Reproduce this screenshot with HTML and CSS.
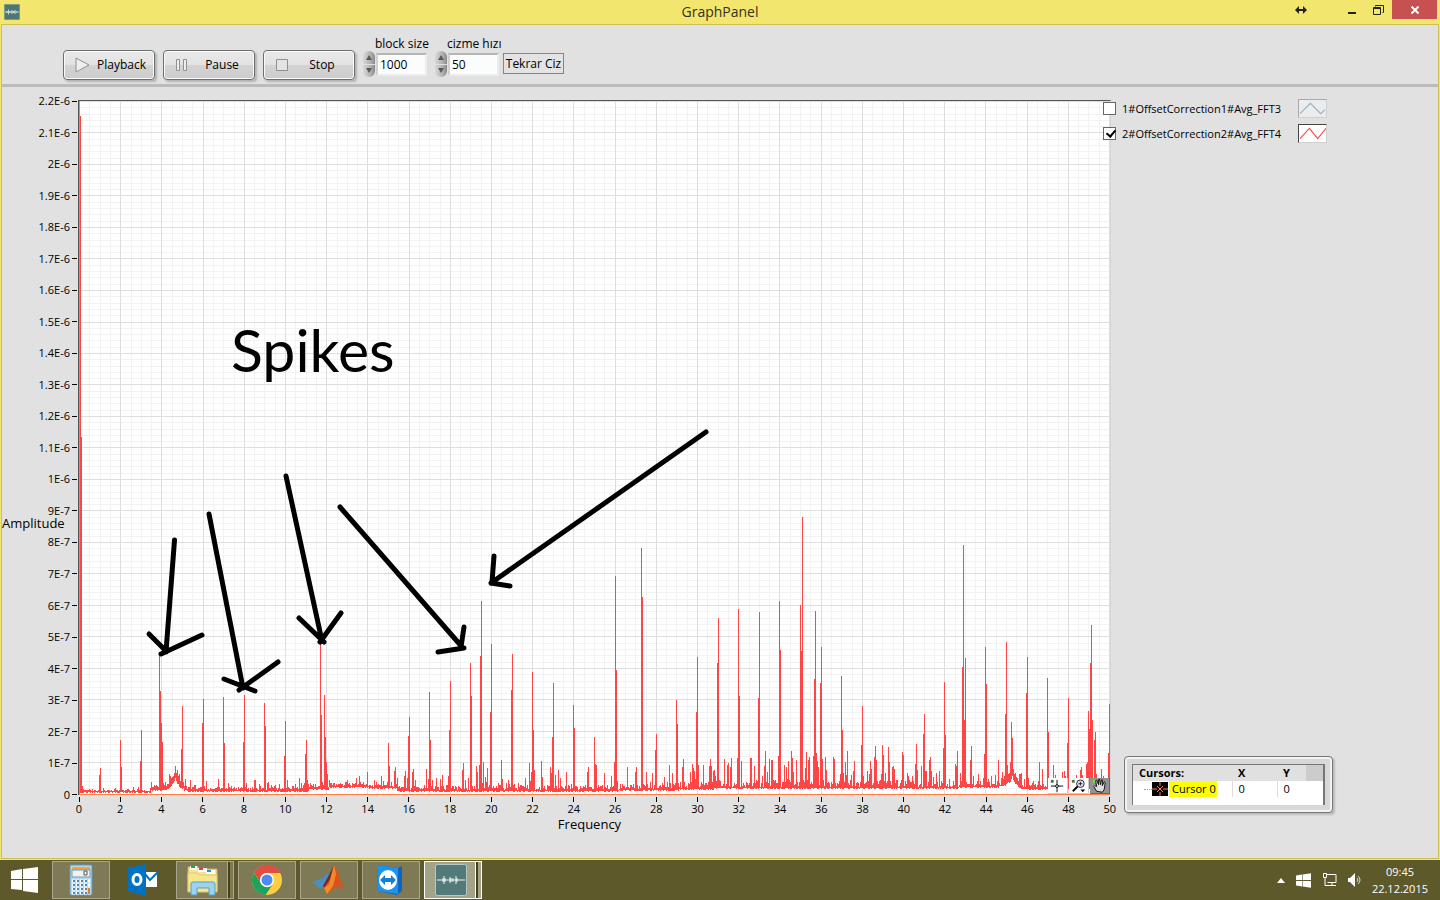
FILE: index.html
```
<!DOCTYPE html>
<html lang="tr">

<head>
  <meta charset="UTF-8" />
  <meta name="viewport" content="width=device-width, initial-scale=1" />
  <title>GraphPanel</title>
  <link rel="stylesheet" href="styles.css">
</head>

<body>

  <div class="window">
    <header class="titlebar">
      <svg class="app-icon" viewBox="0 0 32 32">
        <rect x="0.5" y="0.5" width="31" height="31" rx="2" fill="#4f7776" stroke="#8fa9a5" />
        <path d="M2 16h28M6 14v4M9 11v10M12 14v4M16 12v8M19 14v4M22 12v8M25 15v2" stroke="#e8efee" stroke-width="1.6" />
      </svg>
      <h1>GraphPanel</h1>
      <div class="window-buttons">
        <button class="move-btn" title="Taşı"><svg width="12" height="8" viewBox="0 0 12 8"><path d="M1 4h10" stroke="#222" stroke-width="2" /><path d="M0 4l4-4v8zM12 4l-4-4v8z" fill="#222" /></svg></button>
        <button class="min-btn" title="Küçült"><svg width="8" height="10" viewBox="0 0 8 10"><path d="M0 7h8v2H0z" fill="#222" /></svg></button>
        <button class="restore-btn" title="Geri yükle"><svg width="11" height="10" viewBox="0 0 11 10" fill="none" stroke="#222"><path d="M2.500 1.500v-1h8v7h-1" /><path d="M.5 2.500h7v7h-7zM.5 3.500h7" /></svg></button>
        <button class="close-btn" title="Kapat"><svg width="8" height="8" viewBox="0 0 8 8"><path d="M.5.5l7 7M7.500.5l-7 7" stroke="#fff" stroke-width="2" /></svg></button>
      </div>
    </header>

    <div class="client">
      <div class="toolbar">
        <button class="play-btn"><svg width="15" height="16" viewBox="0 0 15 16"><path d="M1 1l13 7-13 7z" fill="#eee" stroke="#909090" /></svg><span>Playback</span></button>
        <button class="play-btn"><svg width="15" height="14" viewBox="0 0 15 14"><path d="M1.500 1.500h3v11h-3zM8.500 1.500h3v11h-3z" fill="#eee" stroke="#909090" /></svg><span>Pause</span></button>
        <button class="play-btn"><svg width="15" height="14" viewBox="0 0 15 14"><path d="M1.500 1.500h11v11h-11z" fill="#e4e4e4" stroke="#909090" /></svg><span>Stop</span></button>

        <div class="numeric">
          <label for="blockSize">block size</label>
          <div class="numeric-row">
            <span class="spinner"><button title="Artır"></button><button title="Azalt"></button></span>
            <input id="blockSize" type="text" value="1000">
          </div>
        </div>
        <div class="numeric">
          <label for="cizmeHizi">cizme hızı</label>
          <div class="numeric-row">
            <span class="spinner"><button title="Artır"></button><button title="Azalt"></button></span>
            <input id="cizmeHizi" type="text" value="50">
          </div>
        </div>
        <button class="redraw-btn">Tekrar Ciz</button>
      </div>

      <main class="graph">
        <div class="y-axis">
          <div class="y-labels" id="yLabels"></div>
          <span class="y-title">Amplitude</span>
        </div>

        <div class="plot">
          <svg class="plot-canvas" viewBox="0 0 1031 694" preserveAspectRatio="none" shape-rendering="crispEdges">
            <path id="minorGrid" class="minor-grid" />
            <path id="majorGrid" class="major-grid" />
            <path id="trace" class="trace" />
            <path class="cursor-line" d="M0.5 0V693.500H1031" />
          </svg>
          <svg class="notes" viewBox="0 0 1031 694">
            <text x="152" y="271">Spikes</text>
            <path d="M95.500 439L87 551M70 533L87 550M123 534L82 553" />
            <path d="M130 413L164 587M145 578L176 590M199 561L160 589" />
            <path d="M207 375L243 540M220 517L245 541M262 512L241 541" />
            <path d="M261 406L384 547M385 526L382 546M359 551L385 547" />
            <path d="M627 331L412 482M415 455L413 481M431 485L412 482" />
          </svg>
          <div class="palette">
            <button title="Cursor"><svg viewBox="0 0 20 16"><rect x="3" y="2" width="3" height="3" fill="#52704a" /><path d="M9.500 2v5M9.500 10v5M3 8.500h5M11 8.500h5" stroke="#000" /><circle cx="9.500" cy="8.500" r="1.500" fill="none" stroke="#000" /></svg></button>
            <button title="Zoom"><svg viewBox="0 0 20 16"><rect x="3" y="2" width="3" height="3" fill="#52704a" /><circle cx="12" cy="6" r="4" fill="#dcdcff" stroke="#222" /><path d="M10 6h4M12 4v4" stroke="#222" /><path d="M9 9l-5 5" stroke="#000" stroke-width="2" /><path d="M12 12h5l-2.500 3z" /></svg></button>
            <button class="active" title="Pan"><svg viewBox="0 0 20 16"><rect x="3" y="2" width="3" height="3" fill="#6ee51d" /><path d="M7 14L4 9l1-1 2 1-1-6 1-1 2 5V2l1-1 1 6 1-5h1v6l2-4 1 1-1 7-2 3z" fill="#ddd" stroke="#111" /></svg></button>
          </div>
        </div>

        <aside class="side">
          <div class="legend">
            <div class="legend-row">
              <input id="fft3" type="checkbox">
              <label for="fft3">1#OffsetCorrection1#Avg_FFT3</label>
              <svg class="swatch" viewBox="0 0 26 16"><path d="M1 13L11 3l10 10 4-4" stroke="#8fb0c8" fill="none" /></svg>
            </div>
            <div class="legend-row">
              <input id="fft4" type="checkbox" checked>
              <label for="fft4">2#OffsetCorrection2#Avg_FFT4</label>
              <svg class="swatch on" viewBox="0 0 26 16"><path d="M1 13L10 3l8 10 8-10" stroke="#ff4545" fill="none" /></svg>
            </div>
          </div>

          <div class="cursors">
            <div class="cursors-list">
              <table>
                <thead>
                  <tr><th>Cursors:</th><th>X</th><th>Y</th><th></th></tr>
                </thead>
                <tbody>
                  <tr>
                    <td><span class="cursor-cell"><i class="branch"></i><svg width="16" height="14" viewBox="0 0 16 14"><path d="M0 0h16v14H0z" /><path d="M8 0v4M8 10v4M0 7h5M11 7h5M5 4l6 6M11 4l-6 6" stroke="#ff8040" /></svg><mark>Cursor 0</mark></span></td>
                    <td>0</td>
                    <td>0</td>
                    <td></td>
                  </tr>
                </tbody>
              </table>
            </div>
          </div>
        </aside>

        <div class="x-axis">
          <div class="x-labels" id="xLabels"></div>
          <div class="x-title">Frequency</div>
        </div>
      </main>
    </div>
  </div>

  <footer class="taskbar">
    <button class="start-btn" title="Başlat"><svg width="27" height="26" viewBox="0 0 27 26" fill="#fff"><path d="M0 4l11-2v10H0zM12 2l15-2v12H12zM0 13h11v10L0 22zM12 13h15v13l-15-2z" /></svg></button>
    <nav class="tasks">
      <button class="task open" title="Hesap Makinesi">
        <svg width="32" height="32" viewBox="0 0 32 32">
          <rect x="5" y="1" width="22" height="30" rx="1" fill="#b9d8ee" stroke="#5f95bf" />
          <rect x="7" y="3" width="18" height="3" fill="#f0a245" />
          <rect x="7" y="6" width="18" height="7" fill="#eef4f5" stroke="#7998ad" />
          <path d="M19 7h3v4h-3z" fill="none" stroke="#555" />
          <path d="M7 17h18M7 21h18M7 25h18M7 29h18" stroke="#fff" stroke-width="3" stroke-dasharray="3 1" />
          <path d="M8 17h16M8 21h16M8 25h16M8 29h16" stroke="#4f86b3" stroke-width="2" stroke-dasharray="2 2" />
          <path d="M23 24h2v6h-2z" fill="#ef7b16" />
        </svg>
      </button>
      <button class="task" title="Outlook">
        <svg width="32" height="32" viewBox="0 0 32 32">
          <path d="M17 8h13v15H17z" fill="#fff" /><path d="M18 10l5 6 8-8" fill="none" stroke="#0072c6" stroke-width="2" />
          <path d="M1 4l18-4v32L1 27z" fill="#0072c6" />
          <ellipse cx="10" cy="15.500" rx="4" ry="5" fill="none" stroke="#fff" stroke-width="3" />
        </svg>
      </button>
      <button class="task open stacked" title="Dosya Gezgini">
        <svg width="32" height="32" viewBox="0 0 32 32">
          <path d="M1 3h10l2 2h17v22H1z" fill="#f4e49a" stroke="#d0ae4f" />
          <path d="M3 2h7v4H3z" fill="#fff" /><path d="M4 2h4v2H4z" fill="#25a73f" />
          <path d="M11 4h9v4h-9z" fill="#fff" /><path d="M12 4h4v2h-4z" fill="#d94424" />
          <path d="M19 6h9v4h-9z" fill="#fff" /><path d="M20 6h4v2h-4z" fill="#2a91d7" />
          <path d="M1 9h9l2 2h18v17H1z" fill="#f7e68d" stroke="#e2c86d" />
          <path d="M4 31V20q0-2 2-2h20q2 0 2 2v11h-6v-7H10v7z" fill="#9fd2ec" stroke="#5b9dc4" />
        </svg>
      </button>
      <button class="task open" title="Chrome">
        <svg width="32" height="32" viewBox="0 0 32 32">
          <circle cx="16" cy="16" r="15" fill="#ffcd42" />
          <path d="M3 8.500A15 15 0 0 0 14.500 31L22 20a7 7 0 0 1-12-.5z" fill="#1da261" />
          <path d="M3 8.500A15 15 0 0 1 29.500 9H16a7 7 0 0 0-6.500 9.500z" fill="#dc4f42" />
          <circle cx="16" cy="16" r="7" fill="#fff" /><circle cx="16" cy="16" r="5.500" fill="#4c8bf5" />
        </svg>
      </button>
      <button class="task open" title="MATLAB">
        <svg width="32" height="32" viewBox="0 0 32 32">
          <path d="M0 18l9-4 6-5 3 4-7 10-4 2z" fill="#4a8fc0" />
          <path d="M10 22l6-11 5-10-1 14-6 12z" fill="#7d2418" />
          <path d="M21 1q3 3 5 10t5 14l-6-3-5 3-6 5-3-6 6-9z" fill="#d9531e" />
          <path d="M21 1l2 9-3 12-6 8-3-6 5-4z" fill="#f08a2c" />
        </svg>
      </button>
      <button class="task open" title="TeamViewer">
        <svg width="32" height="32" viewBox="0 0 32 32">
          <path d="M2 1l21 3 4-2v25l-5 4-19-4z" fill="#0d63c9" />
          <path d="M2 1l21 3v26L3 27z" fill="#1a94ee" />
          <ellipse cx="13" cy="16" rx="9" ry="10" fill="#fff" />
          <path d="M5 16l5-5v3h6v-3l5 5-5 5v-3h-6v3z" fill="#137fd6" />
        </svg>
      </button>
      <button class="task open stacked current" title="GraphPanel">
        <svg width="32" height="32" viewBox="0 0 32 32">
          <rect x="0.5" y="0.5" width="31" height="31" rx="2" fill="#527a79" stroke="#b6c9c6" />
          <path d="M2 16h28M8 14v4M9 12v8M10 14v4M15 13v6M16 14v4M18 14v4M21 12v8M22 14v4" stroke="#f2f6f5" />
        </svg>
      </button>
    </nav>
    <div class="tray">
      <button title="Gizli simgeler"><svg width="8" height="5" viewBox="0 0 8 5"><path d="M4 0l4 5H0z" fill="#fff" /></svg></button>
      <button title="Windows"><svg width="15" height="15" viewBox="0 0 27 26" fill="#fff"><path d="M0 4l11-2v10H0zM12 2l15-2v12H12zM0 14h11v10L0 22zM12 14h15v12l-15-2z" /></svg></button>
      <button title="Ağ"><svg width="15" height="14" viewBox="0 0 15 14" fill="none" stroke="#fff"><path d="M5 1.500h9v8H5.500M10 9.500v3M6 12.500h8M1.500.5h3v4h-3zM3 4.500v8h3" /></svg></button>
      <button title="Ses"><svg width="13" height="14" viewBox="0 0 13 14"><path d="M0 5h2l5-5v14L2 9H0z" fill="#fff" /><path d="M9 5q2 2 0 4M10 3q4 4 0 8" fill="none" stroke="#ddd" /></svg></button>
      <div class="clock"><span>09:45</span><span>22.12.2015</span></div>
    </div>
  </footer>

  <script src="chart.js"></script>
</body>

</html>
```
FILE: styles.css
```
* {
  box-sizing: border-box;
}

body {
  font-family: "Open Sans", "Noto Sans", sans-serif;
  font-size: 12px;
  line-height: 16px;
  color: #000;
  margin: 0;
  min-height: 100vh;
  display: flex;
  flex-direction: column;
}

button {
  font: inherit;
  border: none;
  padding: 0;
  margin: 0;
  background: transparent;
  color: inherit;
}

svg {
  display: block;
}

.window {
  flex: 1;
  display: flex;
  flex-direction: column;
  background-color: #f3e66f;
  padding: 0 1px 1px;
}

/* title bar */
.titlebar {
  height: 24px;
  display: grid;
  grid-template-columns: 1fr auto 1fr;
  align-items: center;
  color: #333020;
}

.app-icon {
  width: 16px;
  height: 16px;
  margin-left: 3px;
}

.titlebar h1 {
  margin: 0;
  font-size: 14px;
  font-weight: normal;
  line-height: 24px;
}

.window-buttons {
  align-self: start;
  display: flex;
  justify-content: flex-end;
  height: 19px;
  padding-right: 2px;
}

.window-buttons button {
  width: 26px;
  display: flex;
  align-items: center;
  justify-content: center;
}

.window-buttons .move-btn {
  margin-right: 25px;
}

.window-buttons .restore-btn {
  margin-right: 1px;
}

.window-buttons .close-btn {
  width: 45px;
  background-color: #c75050;
}

/* client area */
.client {
  flex: 1;
  display: flex;
  flex-direction: column;
  background-color: #e1e1e1;
  border: 1px solid #cdc151;
}

.toolbar {
  height: 62px;
  border-bottom: 3px solid #bbb;
  padding: 11px 0 0 61px;
  display: flex;
  align-items: flex-start;
}

.play-btn {
  width: 92px;
  height: 30px;
  margin: 14px 8px 0 0;
  padding: 0 8px 0 11px;
  display: flex;
  align-items: center;
  border: 1px solid #6e6e6e;
  border-radius: 4px;
  background: linear-gradient(#e9e9e9 0%, #e2e2e2 50%, #d3d3d3 51%, #cdcdcd 100%);
  box-shadow: inset 0 0 0 1px #fafafa, 2px 2px 2px #b4b4b4;
}

.play-btn span {
  flex: 1;
  padding-left: 8px;
  text-align: center;
}

.play-btn:first-child span {
  padding-left: 0;
  text-align: right;
}

.numeric {
  width: 64px;
  margin-right: 8px;
}

.numeric label {
  display: block;
  padding-left: 12px;
  line-height: 15px;
  white-space: nowrap;
}

.numeric-row {
  display: flex;
  align-items: center;
}

.spinner {
  width: 12px;
  height: 26px;
  margin-right: 1px;
  display: flex;
  flex-direction: column;
  gap: 1px;
}

.spinner button {
  flex: 1;
  display: flex;
  align-items: center;
  justify-content: center;
  background: linear-gradient(90deg, #d8d8d8, #b2b2b2 60%, #8a8a8a);
  border-radius: 6px 6px 0 0;
}

.spinner button::after {
  content: "";
  border: 3px solid transparent;
  border-top: none;
  border-bottom: 5px solid #5a5a5a;
}

.spinner button:last-child {
  border-radius: 0 0 6px 6px;
}

.spinner button:last-child::after {
  border-bottom: none;
  border-top: 5px solid #5a5a5a;
}

.numeric input {
  font: inherit;
  flex: 1;
  min-width: 0;
  height: 23px;
  padding: 0 2px;
  border: 2px solid #ededed;
  border-top-color: #b5b5b5;
  border-left-color: #d0d0d0;
  background-color: #fbfdfd;
}

.redraw-btn {
  height: 21px;
  margin: 17px 0 0 -4px;
  width: 61px;
  line-height: 17px;
  white-space: nowrap;
  background-color: #e3e3e3;
  border: 1px solid #3c96ea;
}

/* graph */
.graph {
  flex: 1;
  padding-top: 13px;
  display: grid;
  grid-template-columns: 76px minmax(0, 1fr) 327px;
  grid-template-rows: minmax(0, 1fr) 63px;
}

.y-axis {
  position: relative;
}

.y-labels,
.x-labels {
  display: flex;
  justify-content: space-between;
  font-size: 11px;
}

.y-labels {
  flex-direction: column;
  margin: -7px 0;
  height: calc(100% + 15px);
}

.y-labels span {
  display: flex;
  align-items: center;
  justify-content: flex-end;
  gap: 2px;
  height: 16px;
  padding-right: 1px;
}

.y-labels span::after {
  content: "";
  width: 5px;
  height: 1px;
  background-color: #000;
}

.y-title,
.x-title {
  font-size: 13px;
}

.y-title {
  position: absolute;
  left: 0;
  bottom: 264px;
}

.plot {
  position: relative;
  background-color: #fff;
  border: 1px solid #555;
  border-right-color: #d6d6d6;
  border-bottom: none;
}

.plot-canvas,
.notes {
  position: absolute;
  inset: 0;
  width: 100%;
  height: 100%;
}

.minor-grid {
  stroke: #f2f2f2;
}

.major-grid {
  stroke: #dedede;
}

.trace {
  stroke: #ff4545;
}

.cursor-line {
  stroke: #ff8040;
  fill: none;
}

.notes path {
  fill: none;
  stroke: #000;
  stroke-width: 5px;
  stroke-linecap: round;
}

.notes text {
  font-family: Lato, sans-serif;
  font-size: 59px;
}

.palette {
  position: absolute;
  right: 0;
  bottom: 1px;
  display: flex;
  gap: 1px;
}

.palette button {
  width: 20px;
  height: 16px;
  background-color: #fff;
  border-right: 1px solid #ccc;
  border-bottom: 1px solid #ccc;
}

.palette .active {
  background-color: #929292;
  border-color: #666;
}

.x-axis {
  grid-column: 2;
}

.x-labels {
  margin: 2px -9px 0;
}

.x-labels span {
  width: 20px;
  display: flex;
  flex-direction: column;
  align-items: center;
  line-height: 14px;
}

.x-labels span::before {
  content: "";
  width: 1px;
  height: 5px;
  background-color: #000;
}

.x-title {
  text-align: center;
  padding-right: 10px;
}

/* legend and cursor list */
.side {
  position: relative;
  display: flex;
  flex-direction: column;
  justify-content: space-between;
  align-items: flex-start;
  margin-bottom: -18px;
}

.legend {
  margin: -1px 0 0 -8px;
  display: flex;
  flex-direction: column;
  gap: 6px;
}

.legend-row {
  display: flex;
  align-items: center;
  height: 19px;
}

.legend-row input {
  appearance: none;
  width: 13px;
  height: 13px;
  margin: 0 6px 0 0;
  border: 1px solid #666;
  background-color: #fff;
}

.legend-row input:checked::after {
  content: "";
  display: block;
  width: 4px;
  height: 7px;
  margin: 0 0 0 4px;
  border: solid #000;
  border-width: 0 2px 2px 0;
  transform: rotate(40deg);
}

.legend-row label {
  width: 176px;
  white-space: nowrap;
  font-size: 11px;
}

.swatch {
  width: 29px;
  height: 19px;
  border: 1px solid #d0d0d0;
  border-top-color: #aaa;
  border-left-color: #aaa;
  background-color: #ececec;
}

.swatch.on {
  background-color: #fff;
  border-top-color: #444;
  border-left-color: #444;
}

.cursors {
  margin-left: 13px;
  width: 209px;
  padding: 7px;
  border: 1px solid #777;
  border-radius: 4px;
  background-color: #d8d8d8;
  box-shadow: inset 0 0 0 2px #f2f2f2, 2px 2px 2px #bbb;
}

.cursors-list {
  height: 41px;
  background-color: #fff;
  border: 1px solid #777;
  border-right-width: 2px;
  border-bottom: none;
}

.cursors table {
  width: 100%;
  border-collapse: collapse;
  table-layout: fixed;
  font-size: 11px;
}

.cursors th,
.cursors td {
  height: 16px;
  padding: 0 0 0 6px;
  line-height: 16px;
  text-align: left;
}

.cursors th {
  background-color: #e0e0e0;
}

.cursors th:first-child {
  width: 99px;
}

.cursors th:nth-child(2) {
  width: 45px;
}

.cursors th:last-child {
  width: 17px;
  background-color: #ccc;
}

.cursors td:first-child {
  padding: 0;
}

.cursors td:nth-child(-n+2) {
  border-right: 1px solid #ddd;
}

.cursor-cell {
  display: flex;
  align-items: center;
  padding-left: 11px;
}

.branch {
  width: 8px;
  border-top: 1px dotted #999;
}

.cursors mark {
  background-color: #ff0;
  margin-left: 1px;
  padding: 0 1px 0 3px;
}

/* taskbar */
.taskbar {
  height: 40px;
  background-color: #5e592b;
  display: flex;
  align-items: center;
  color: #fff;
}

.start-btn {
  width: 52px;
  padding-left: 11px;
}

.tasks {
  display: flex;
  gap: 4px;
  flex: 1;
}

.task {
  position: relative;
  width: 58px;
  height: 38px;
  display: flex;
  align-items: center;
  justify-content: center;
}

.task.open {
  background-color: #7e7a55;
  border: 1px solid #a9a68b;
}

.task.stacked {
  padding-right: 5px;
}

.task.stacked::after {
  content: "";
  position: absolute;
  top: 0;
  bottom: 0;
  right: 3px;
  width: 2px;
  background-color: #454119;
  border-left: 1px solid #a9a68b;
}

.task.current {
  background-color: #a5a28a;
  border-color: #fff;
}

.task.current::after {
  border-color: #fff;
}

.tray {
  display: flex;
  align-items: center;
  gap: 11px;
  padding-right: 12px;
}

.clock {
  display: flex;
  flex-direction: column;
  align-items: center;
  font-size: 11px;
  line-height: 17px;
}
```
FILE: chart.js
```
// Plot area units: 1030 x 693, origin at bottom left
const W = 1030;
const H = 693;

function frac(f) {
  return Math.round(f * W) + 0.5;
}

// Axis labels
const yLabels = document.getElementById('yLabels');
for (let i = 22; i >= 0; i--) {
  const span = document.createElement('span');
  span.textContent = i === 0 ? '0' : i < 10 ? i + 'E-7' : i / 10 + 'E-6';
  yLabels.appendChild(span);
}

const xLabels = document.getElementById('xLabels');
for (let i = 0; i <= 50; i += 2) {
  const span = document.createElement('span');
  span.textContent = i;
  xLabels.appendChild(span);
}

// Grid
let minor = '';
let major = '';
for (let i = 1; i <= 100; i++) {
  const line = `M${frac(i / 100)} 0V694`;
  if (i % 4 === 0) major += line; else minor += line;
}
for (let i = 1; i <= 110; i++) {
  const y = H - Math.round(i / 110 * H) + 0.5;
  const line = `M0 ${y}H1031`;
  if (i % 5 === 0) major += line; else minor += line;
}
document.getElementById('minorGrid').setAttribute('d', minor);
document.getElementById('majorGrid').setAttribute('d', major);

// Spectrum peaks: [bin, level]
const peaks = [
  [1, 678], [2, 357], [3, 8], [20, 19], [21, 26], [41, 54], [42, 27], [61, 33], [62, 64],
  [80, 139], [81, 103], [82, 71], [83, 52], [102, 45], [103, 88], [123, 71], [124, 95],
  [144, 97], [145, 51], [164, 52], [165, 99], [185, 91], [186, 68], [205, 38], [206, 73],
  [226, 40], [227, 54], [241, 150], [242, 79], [245, 99], [246, 57], [247, 32], [248, 20],
  [288, 22], [302, 18], [309, 51], [310, 28], [315, 23], [316, 27], [329, 58], [330, 77],
  [350, 102], [351, 54], [370, 64], [371, 113], [391, 131], [392, 98], [401, 138], [402, 193],
  [411, 82], [412, 150], [432, 104], [433, 140], [453, 122], [454, 64], [473, 57], [474, 111],
  [494, 89], [495, 66], [515, 57], [516, 30], [535, 32], [536, 218], [537, 124], [548, 27],
  [557, 27], [562, 246], [563, 197], [576, 44], [577, 60], [590, 29], [597, 94], [598, 70],
  [603, 27], [604, 35], [617, 82], [618, 137], [630, 28], [631, 35], [638, 131], [639, 176],
  [645, 35], [651, 27], [658, 36], [659, 185], [660, 98], [672, 36], [679, 96], [680, 182],
  [700, 193], [701, 144], [709, 33], [713, 36], [717, 34], [721, 189], [722, 143], [723, 277],
  [727, 42], [729, 34], [735, 115], [736, 183], [737, 41], [738, 33], [741, 111], [742, 147],
  [746, 37], [754, 37], [755, 35], [762, 118], [763, 64], [766, 32], [768, 43], [775, 33],
  [782, 49], [783, 88], [795, 37], [796, 48], [803, 49], [804, 39], [809, 47], [810, 32],
  [823, 42], [824, 39], [836, 30], [837, 50], [844, 60], [845, 80], [850, 34], [851, 37],
  [864, 46], [865, 112], [866, 59], [877, 28], [878, 43], [883, 127], [884, 249], [885, 74],
  [886, 136], [891, 34], [892, 48], [905, 40], [906, 147], [907, 110], [919, 34], [926, 80],
  [927, 152], [931, 32], [932, 72], [933, 56], [934, 25], [935, 20], [947, 101], [948, 137],
  [960, 32], [968, 116], [969, 62], [974, 29], [988, 51], [989, 96], [1001, 24], [1007, 30],
  [1008, 32], [1009, 83], [1010, 65], [1011, 131], [1012, 169], [1013, 74], [1015, 54],
  [1016, 62], [1017, 20], [1029, 41], [1030, 90]
];

// Noise envelope: [first bin, floor, usual ripple, burst height]
const noise = [
  [0, 2, 1, 2], [50, 2, 1, 5], [72, 4, 4, 10], [105, 3, 3, 10], [230, 5, 4, 9],
  [250, 7, 4, 11], [290, 6, 3, 10], [318, 3, 4, 20], [375, 3, 5, 27], [455, 3, 5, 26],
  [540, 4, 5, 17], [600, 5, 6, 24], [635, 6, 8, 30], [750, 6, 7, 26], [810, 6, 7, 18],
  [880, 7, 5, 12], [930, 5, 5, 16], [1000, 6, 8, 18]
];

let seed = 7;
function random() {
  seed = (seed * 16807) % 2147483647;
  return seed / 2147483647;
}

const levels = [];
const floors = [];
for (let i = 0; i <= W; i++) {
  const n = noise.filter(r => r[0] <= i).pop();
  // broad humps around 4.7 Hz and 45.3 Hz
  const hump = 20 * Math.exp(-Math.abs(i - 96) / 4) + 22 * Math.exp(-Math.abs(i - 933) / 4);
  floors[i] = n[1] + hump * 0.6 - Math.round(random());
  levels[i] = n[1] + 1 + hump + random() * n[2];
  if (random() < 0.34) levels[i] += random() * n[3];
}
peaks.forEach(p => {
  levels[p[0]] = p[1];
});

let trace = '';
for (let i = 1; i <= W; i++) {
  trace += `M${i + 0.5} ${Math.round(H - floors[i])}V${Math.round(H - levels[i])}`;
}
document.getElementById('trace').setAttribute('d', trace);
```
